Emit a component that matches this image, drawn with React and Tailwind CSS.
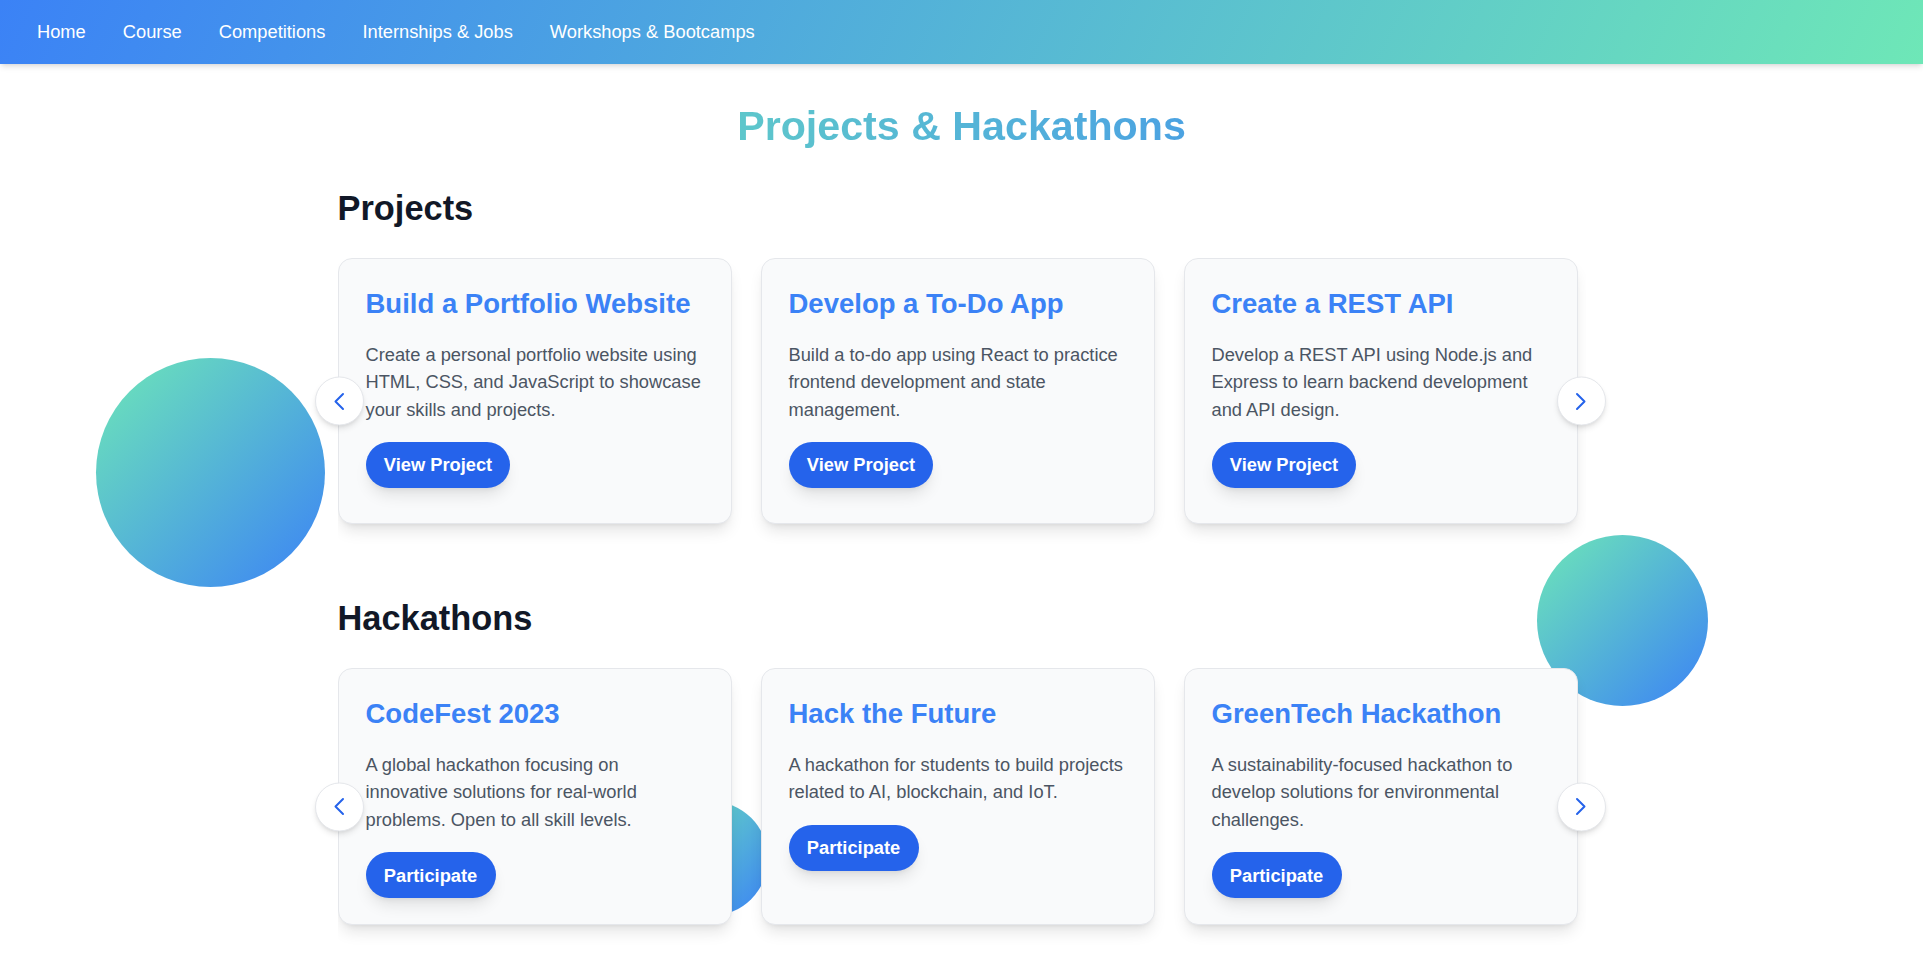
import React from "react";

const projects = [
  {
    title: "Build a Portfolio Website",
    desc: "Create a personal portfolio website using HTML, CSS, and JavaScript to showcase your skills and projects.",
    cta: "View Project",
  },
  {
    title: "Develop a To-Do App",
    desc: "Build a to-do app using React to practice frontend development and state management.",
    cta: "View Project",
  },
  {
    title: "Create a REST API",
    desc: "Develop a REST API using Node.js and Express to learn backend development and API design.",
    cta: "View Project",
  },
];

const hackathons = [
  {
    title: "CodeFest 2023",
    desc: "A global hackathon focusing on innovative solutions for real-world problems. Open to all skill levels.",
    cta: "Participate",
  },
  {
    title: "Hack the Future",
    desc: "A hackathon for students to build projects related to AI, blockchain, and IoT.",
    cta: "Participate",
  },
  {
    title: "GreenTech Hackathon",
    desc: "A sustainability-focused hackathon to develop solutions for environmental challenges.",
    cta: "Participate",
  },
];

function ChevronLeft() {
  return (
    <svg width="12" height="18" viewBox="0 0 12 18" fill="none">
      <path d="M10 1.5 L2.5 9 L10 16.5" stroke="#2563eb" strokeWidth="2" strokeLinecap="round" strokeLinejoin="round" />
    </svg>
  );
}

function ChevronRight() {
  return (
    <svg width="12" height="18" viewBox="0 0 12 18" fill="none">
      <path d="M2 1.5 L9.5 9 L2 16.5" stroke="#2563eb" strokeWidth="2" strokeLinecap="round" strokeLinejoin="round" />
    </svg>
  );
}

function Card({ item, tall }) {
  return (
    <div
      className={
        "w-[394px] shrink-0 bg-[#f9fafb] border border-[#e5e7eb] rounded-[14px] shadow-lg pt-[27px] px-[27px] " +
        (tall ? "pb-[35px]" : "pb-[26px]")
      }
    >
      <h3 className="text-[27.5px] font-bold leading-[36px] text-[#3b82f6] mb-[18.5px]">{item.title}</h3>
      <p className="text-[18.3px] leading-[27.7px] text-[#4b5563]">{item.desc}</p>
      <button className="mt-[18.5px] h-[46px] px-[18.3px] rounded-full bg-[#2563eb] text-white font-bold text-[18.3px] shadow-lg">
        {item.cta}
      </button>
    </div>
  );
}

function Carousel({ items, tall }) {
  return (
    <div className="relative">
      <div className="flex gap-[29px] overflow-hidden pb-[20px]">
        {items.map((it) => (
          <Card key={it.title} item={it} tall={tall} />
        ))}
      </div>
      <button className="absolute top-1/2 -translate-y-1/2 left-[-23px] w-[49px] h-[49px] rounded-full bg-white border border-[#e5e7eb] shadow-md flex items-center justify-center">
        <ChevronLeft />
      </button>
      <button className="absolute top-1/2 -translate-y-1/2 right-[-20px] w-[49px] h-[49px] rounded-full bg-white border border-[#e5e7eb] shadow-md flex items-center justify-center">
        <ChevronRight />
      </button>
    </div>
  );
}

export default function App() {
  const links = ["Home", "Course", "Competitions", "Internships & Jobs", "Workshops & Bootcamps"];
  return (
    <div className="relative min-h-screen bg-white overflow-hidden font-['Liberation_Sans',Arial,sans-serif]">
      <nav className="relative z-20 h-[64px] bg-[linear-gradient(115deg,#3b82f6,#6ee7b7)] shadow-md flex items-center pl-[37px] gap-[37px]">
        {links.map((l) => (
          <a key={l} href="#" className="text-white text-[18.3px]">
            {l}
          </a>
        ))}
      </nav>

      {/* decorative floating shapes */}
      <div className="absolute left-[96px] top-[358px] w-[229px] h-[229px] rounded-full bg-[linear-gradient(135deg,#6ee7b7,#3b82f6)]" />
      <div className="absolute left-[1537px] top-[535px] w-[171px] h-[171px] rounded-full bg-[linear-gradient(135deg,#6ee7b7,#3b82f6)]" />
      <div className="absolute left-[653px] top-[801px] w-[115px] h-[115px] rounded-full bg-[linear-gradient(135deg,#6ee7b7,#3b82f6)]" />

      <main className="relative z-10 w-[1248px] mx-auto pt-[37px]">
        <h1 className="text-[41.2px] font-bold leading-[50px] text-center mb-[37px] bg-[linear-gradient(90deg,#6ee7b7,#3b82f6)] bg-clip-text text-transparent">
          Projects &amp; Hackathons
        </h1>

        <section>
          <h2 className="text-[34.4px] font-bold leading-[41px] text-[#111827] mb-[29px]">Projects</h2>
          <Carousel items={projects} tall />
        </section>

        <section className="mt-[54px]">
          <h2 className="text-[34.4px] font-bold leading-[41px] text-[#111827] mb-[29px]">Hackathons</h2>
          <Carousel items={hackathons} />
        </section>
      </main>
    </div>
  );
}
